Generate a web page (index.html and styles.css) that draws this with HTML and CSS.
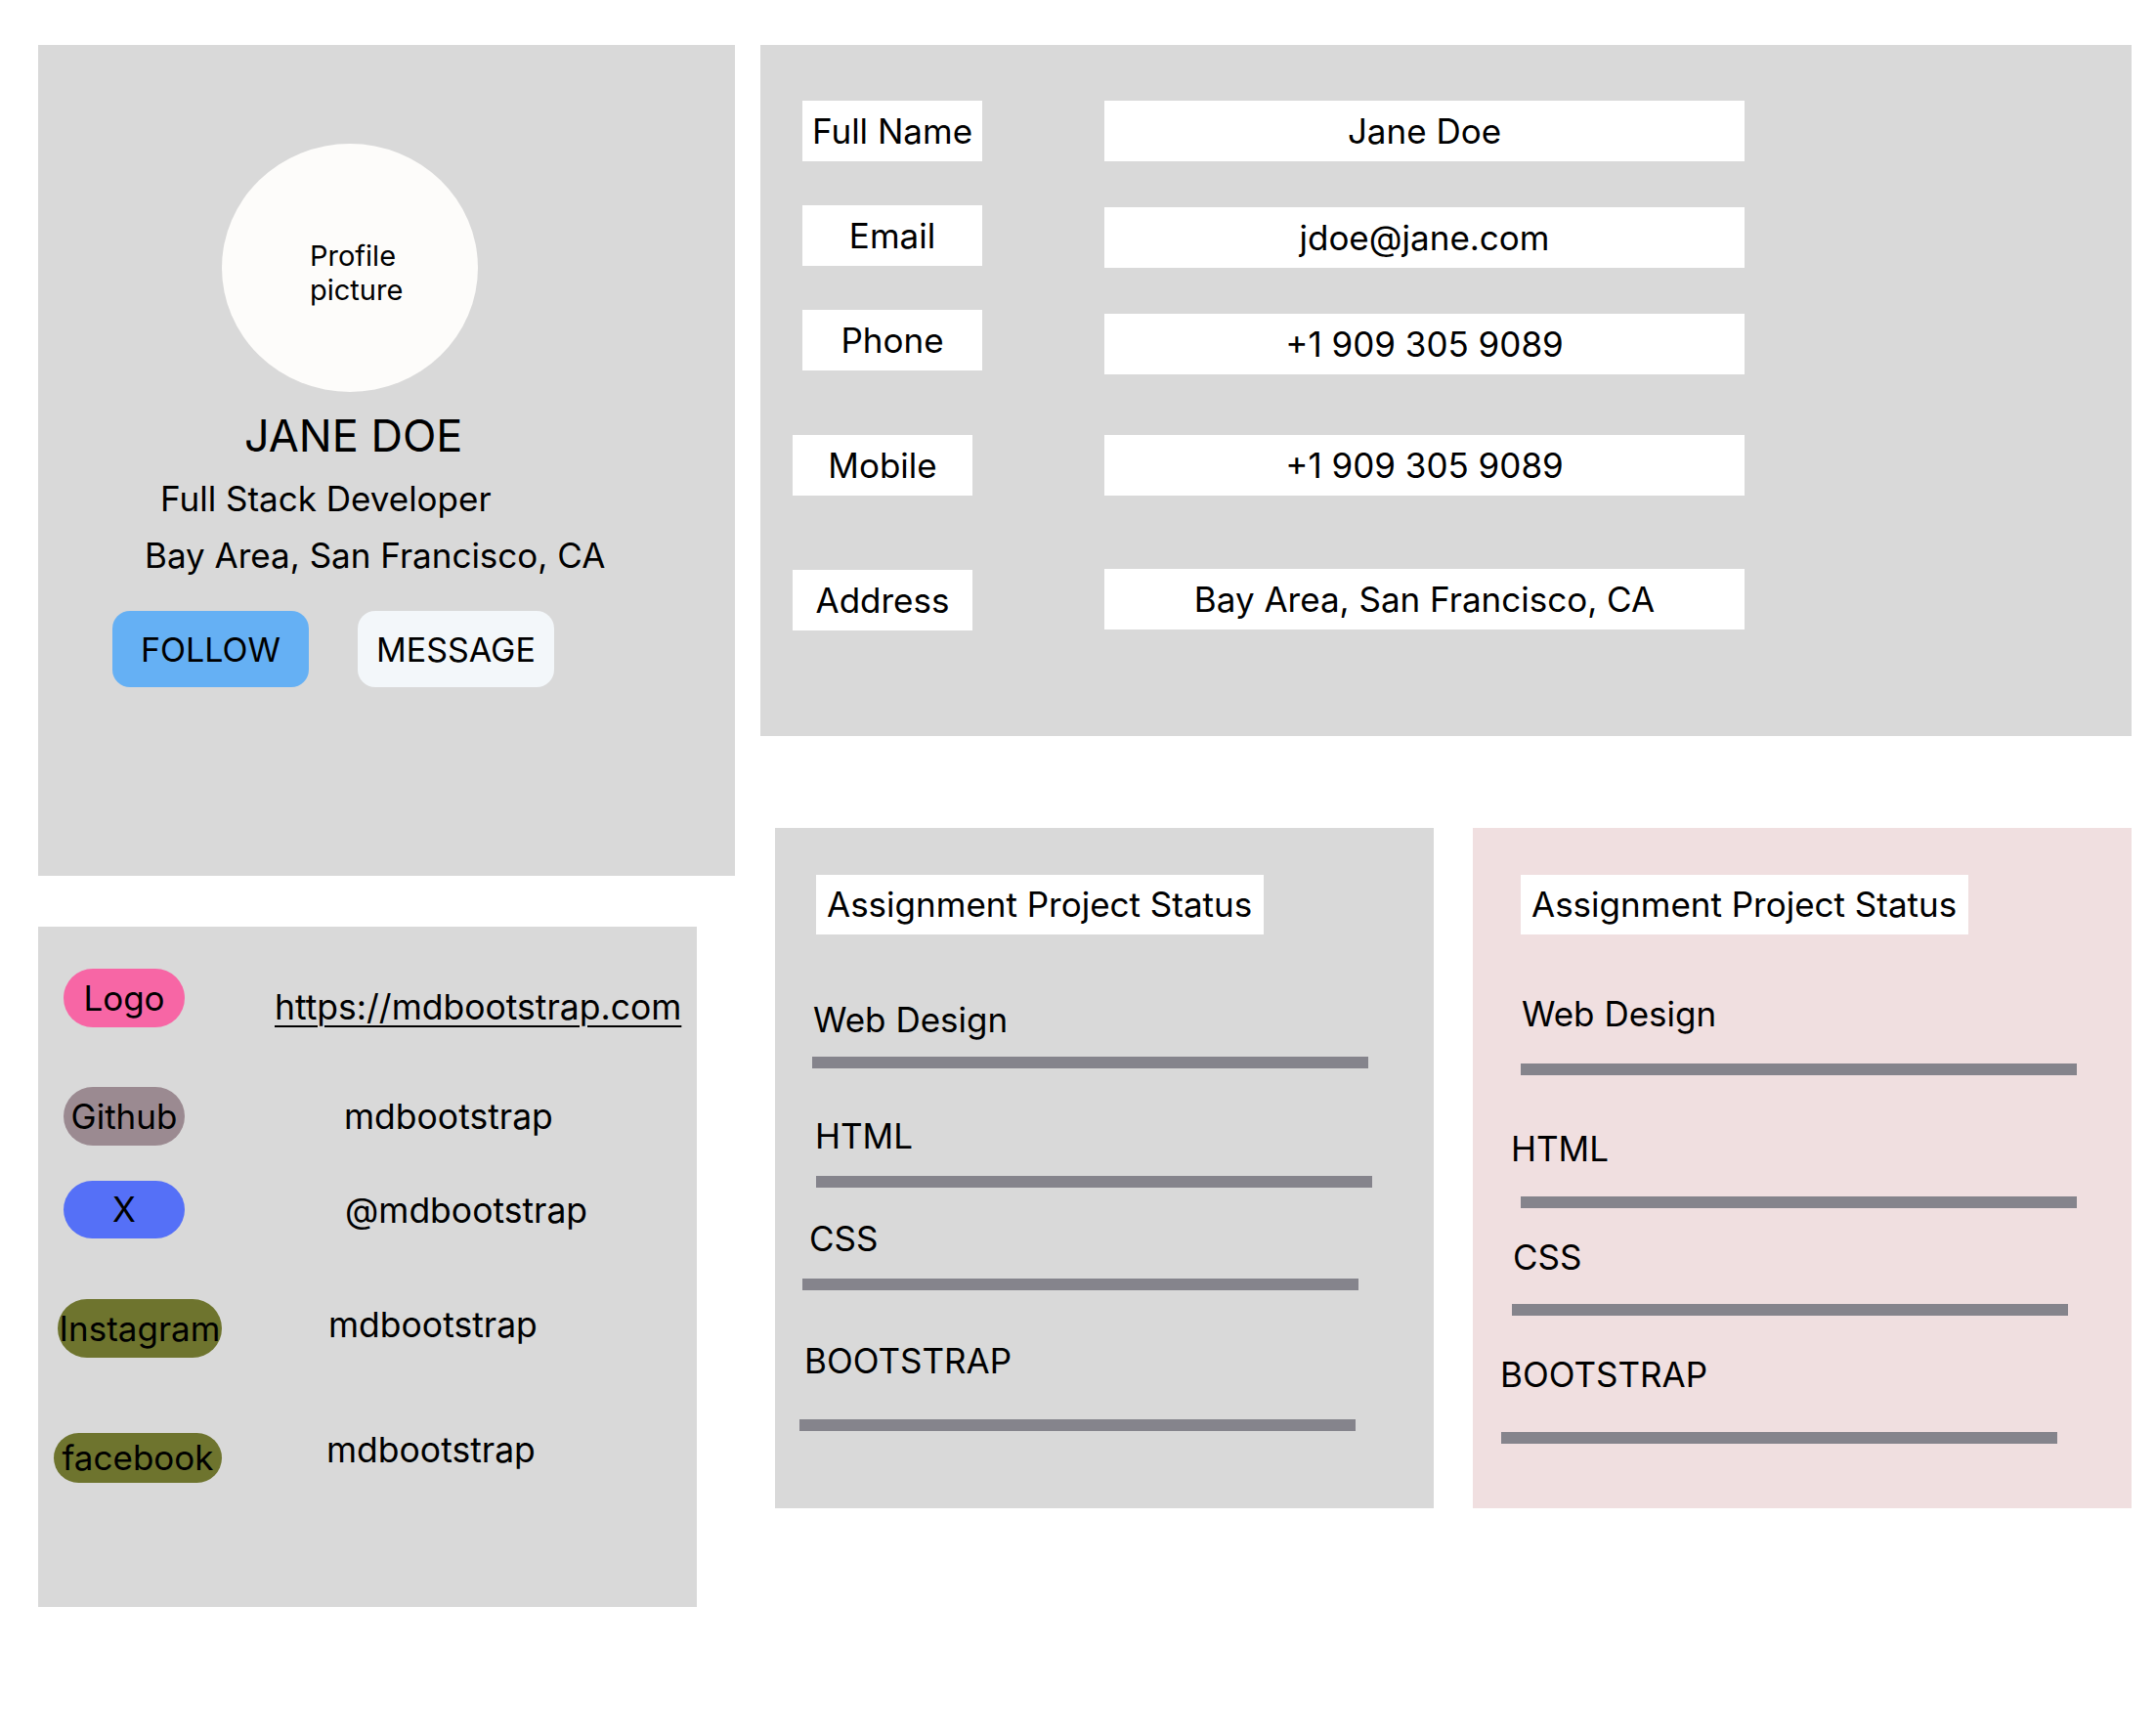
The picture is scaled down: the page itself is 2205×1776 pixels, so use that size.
FILE: index.html
```html
<!DOCTYPE html>
<html lang="en">
<head>
<meta charset="utf-8">
<title>Profile</title>
<link rel="stylesheet" href="styles.css">
</head>
<body>
<div class="page">
  <div class="col-left">
    <section class="card profile">
      <div class="avatar"><span>Profile picture</span></div>
      <h1 class="name">JANE DOE</h1>
      <p class="role">Full Stack Developer</p>
      <p class="location">Bay Area, San Francisco, CA</p>
      <div class="actions">
        <button class="btn btn-follow">FOLLOW</button>
        <button class="btn btn-message">MESSAGE</button>
      </div>
    </section>
    <section class="card links">
      <div class="link-row row-logo">
        <span class="pill pill-logo">Logo</span>
        <a class="link-text" href="#">https://mdbootstrap.com</a>
      </div>
      <div class="link-row row-github">
        <span class="pill pill-github">Github</span>
        <span class="link-text">mdbootstrap</span>
      </div>
      <div class="link-row row-x">
        <span class="pill pill-x">X</span>
        <span class="link-text">@mdbootstrap</span>
      </div>
      <div class="link-row row-instagram">
        <span class="pill pill-instagram">Instagram</span>
        <span class="link-text">mdbootstrap</span>
      </div>
      <div class="link-row row-facebook">
        <span class="pill pill-facebook">facebook</span>
        <span class="link-text">mdbootstrap</span>
      </div>
    </section>
  </div>
  <div class="col-right">
    <section class="card info">
      <div class="info-row">
        <div class="info-label">Full Name</div>
        <div class="info-value">Jane Doe</div>
      </div>
      <div class="info-row row-email">
        <div class="info-label">Email</div>
        <div class="info-value">jdoe@jane.com</div>
      </div>
      <div class="info-row row-phone">
        <div class="info-label">Phone</div>
        <div class="info-value">+1 909 305 9089</div>
      </div>
      <div class="info-row shift row-mobile">
        <div class="info-label">Mobile</div>
        <div class="info-value">+1 909 305 9089</div>
      </div>
      <div class="info-row shift row-address">
        <div class="info-label">Address</div>
        <div class="info-value">Bay Area, San Francisco, CA</div>
      </div>
    </section>
    <div class="status-row">
      <section class="card status status-a">
        <h2 class="status-title">Assignment Project Status</h2>
        <div class="skill skill-web"><div class="skill-name">Web Design</div><div class="bar"></div></div>
        <div class="skill skill-html"><div class="skill-name">HTML</div><div class="bar"></div></div>
        <div class="skill skill-css"><div class="skill-name">CSS</div><div class="bar"></div></div>
        <div class="skill skill-bs"><div class="skill-name">BOOTSTRAP</div><div class="bar"></div></div>
      </section>
      <section class="card status status-b">
        <h2 class="status-title">Assignment Project Status</h2>
        <div class="skill skill-web"><div class="skill-name">Web Design</div><div class="bar"></div></div>
        <div class="skill skill-html"><div class="skill-name">HTML</div><div class="bar"></div></div>
        <div class="skill skill-css"><div class="skill-name">CSS</div><div class="bar"></div></div>
        <div class="skill skill-bs"><div class="skill-name">BOOTSTRAP</div><div class="bar"></div></div>
      </section>
    </div>
  </div>
</div>
</body>
</html>
```
FILE: styles.css
```css
* { box-sizing: border-box; }

body {
  margin: 0;
  background: #ffffff;
  color: #000000;
  font-family: Inter, "Noto Sans", "Liberation Sans", sans-serif;
  font-size: 35px;
  line-height: 41px;
}

h1, h2, p { margin: 0; font-weight: 400; }

.page {
  display: flex;
  align-items: flex-start;
  gap: 26px;
  padding: 46px 0 0 39px;
}

.card { background: #d9d9d9; }

/* ---------- left column ---------- */
.col-left {
  display: flex;
  flex-direction: column;
  gap: 52px;
  width: 713px;
}

.profile {
  height: 850px;
  padding-top: 101px;
  display: flex;
  flex-direction: column;
  align-items: flex-start;
}

.avatar {
  width: 262px;
  height: 254px;
  margin-left: 188px;
  border-radius: 50%;
  background: #fdfcfa;
  padding: 97px 0 0 90px;
  font-size: 29px;
  line-height: 35px;
}
.avatar span { display: block; width: 120px; }

.name {
  font-size: 45px;
  line-height: 54px;
  margin: 18px 0 0 211px;
}

.role {
  margin: 17px 0 0 125px;
}

.location {
  margin: 17px 0 0 109px;
}

.actions {
  display: flex;
  gap: 50px;
  margin: 36px 0 0 76px;
}

.btn {
  width: 201px;
  height: 78px;
  border: 0;
  border-radius: 18px;
  font-family: inherit;
  font-size: 34px;
  color: #000;
  padding: 0;
}
.btn-follow { background: #65b0f4; }
.btn-message { background: #f3f7fa; }

/* links card */
.links {
  width: 674px;
  height: 696px;
  padding-top: 43px;
}

.link-row {
  display: flex;
  align-items: flex-start;
}

.pill {
  flex: none;
  width: 124px;
  height: 60px;
  margin-left: 26px;
  border-radius: 30px;
  display: flex;
  align-items: center;
  justify-content: center;
  white-space: nowrap;
}
.pill-logo { background: #f766a5; }
.pill-github { background: #9b8a91; }
.pill-x { background: #5570f7; height: 59px; }
.pill-instagram { background: #6e742e; width: 168px; margin-left: 20px; }
.pill-facebook { background: #6e742e; width: 172px; height: 51px; margin-left: 16px; border-radius: 26px; }

.link-text { color: #000; white-space: nowrap; font-size: 35.5px; }
a.link-text {
  text-decoration: underline;
  text-decoration-thickness: 2px;
  text-underline-offset: 6px;
}

.row-logo .link-text { margin: 19px 0 0 92px; }
.row-github { margin-top: 61px; }
.row-github .link-text { margin: 10px 0 0 163px; }
.row-x { margin-top: 36px; }
.row-x .link-text { margin: 10px 0 0 164px; }
.row-instagram { margin-top: 62px; }
.row-instagram .link-text { margin: 6px 0 0 109px; }
.row-facebook { margin-top: 77px; }
.row-facebook .link-text { margin: -3px 0 0 107px; }

/* ---------- right column ---------- */
.col-right {
  width: 1403px;
  display: flex;
  flex-direction: column;
}

.info {
  height: 707px;
  padding: 57px 0 0 43px;
}

.info-row {
  display: flex;
  align-items: flex-start;
}

.info-label,
.info-value {
  height: 62px;
  background: #ffffff;
  display: flex;
  align-items: center;
  justify-content: center;
  white-space: nowrap;
}
.info-label { width: 184px; }
.info-value { width: 655px; margin-left: 125px; }

.row-email { margin-top: 45px; }
.row-email .info-value { margin-top: 2px; }
.row-phone { margin-top: 43px; }
.row-phone .info-value { margin-top: 4px; }
.row-mobile { margin-top: 62px; }
.row-address { margin-top: 75px; }
.row-address .info-label { margin-top: 1px; }

.info-row.shift .info-label { margin-left: -10px; }
.info-row.shift .info-value { margin-left: 135px; }

/* status cards */
.status-row {
  display: flex;
  gap: 40px;
  margin-top: 94px;
  padding-left: 15px;
}

.status {
  width: 674px;
  height: 696px;
  padding-top: 48px;
}
.status-b { background: #f0dfe0; }

.status-title {
  width: fit-content;
  height: 61px;
  line-height: 61px;
  padding: 0 12px 0 11px;
  background: #ffffff;
  font-size: 35px;
  white-space: nowrap;
}
.status-a .status-title { margin-left: 42px; }
.status-b .status-title { margin-left: 49px; }

.skill-name { white-space: nowrap; }

.bar {
  width: 569px;
  height: 12px;
  background: #85848c;
}

/* card A offsets */
.status-a .skill-web .skill-name { margin: 67px 0 0 39px; }
.status-a .skill-web .bar { margin: 17px 0 0 38px; }
.status-a .skill-html .skill-name { margin: 49px 0 0 41px; }
.status-a .skill-html .bar { margin: 20px 0 0 42px; }
.status-a .skill-css .skill-name { margin: 32px 0 0 35px; }
.status-a .skill-css .bar { margin: 20px 0 0 28px; }
.status-a .skill-bs .skill-name { margin: 52px 0 0 30px; }
.status-a .skill-bs .bar { margin: 39px 0 0 25px; }

/* card B offsets */
.status-b .skill-web .skill-name { margin: 61px 0 0 50px; }
.status-b .skill-web .bar { margin: 30px 0 0 49px; }
.status-b .skill-html .skill-name { margin: 55px 0 0 39px; }
.status-b .skill-html .bar { margin: 28px 0 0 49px; }
.status-b .skill-css .skill-name { margin: 30px 0 0 41px; }
.status-b .skill-css .bar { margin: 27px 0 0 40px; }
.status-b .skill-bs .skill-name { margin: 40px 0 0 28px; }
.status-b .skill-bs .bar { margin: 38px 0 0 29px; }
```
